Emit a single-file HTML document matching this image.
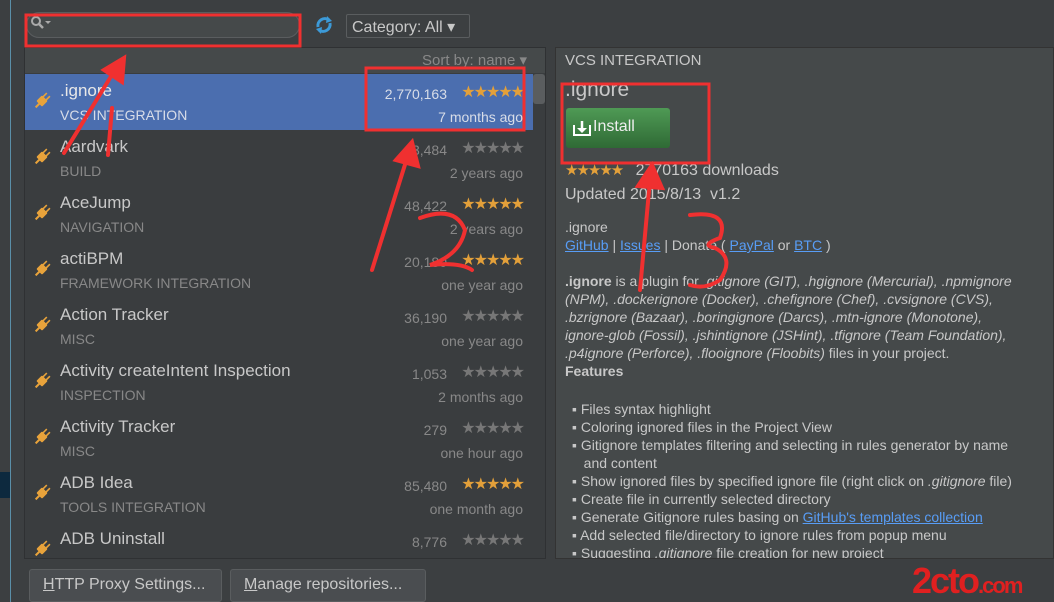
<!DOCTYPE html>
<html><head><meta charset="utf-8"><style>
*{margin:0;padding:0;box-sizing:border-box}
body{width:1054px;height:602px;background:#3c3f41;font-family:"Liberation Sans",sans-serif;color:#bbb;position:relative;overflow:hidden}
.abs{position:absolute}
.row{position:absolute;left:25px;width:508px;height:56px}
.row .n{position:absolute;left:35px;top:7px;font-size:17px;color:#c8c8c8}
.row .c{position:absolute;left:35px;top:33px;font-size:14px;color:#888}
.row .d{position:absolute;right:86px;top:12px;font-size:14px;color:#888}
.row .s{position:absolute;right:10px;top:8px;font-size:16px;color:#777;letter-spacing:-2px}
.row .s.g{color:#e3a03a}
.row .t{position:absolute;right:10px;top:35px;font-size:14px;color:#888}
.row svg{position:absolute;left:7px;top:17px}
.sel{background:#4b6eaf}
.sel .c,.sel .d,.sel .t{color:#d8dde8}
.sel .n{color:#e8e8e8}
.rp{font-size:14px;color:#c8c8c8;line-height:18px}
a{color:#589df6;text-decoration:underline}
.btn{position:absolute;top:569px;height:33px;border:1px solid #5a5d5f;border-radius:3px;background:#4a4d50;color:#c8c8c8;font-size:16px;padding:6px 13px}
</style></head><body>
<svg width="0" height="0" style="position:absolute"><defs><g id="plug"><g transform="rotate(45 10 10)"><rect x="6" y="6" width="8" height="8" rx="1" fill="#e8a33b"/><rect x="7" y="1" width="1.6" height="6" fill="#e8a33b"/><rect x="11.4" y="1" width="1.6" height="6" fill="#e8a33b"/><rect x="9" y="13" width="2" height="6" fill="#e8a33b"/></g></g></defs></svg>
<div class="abs" style="left:10px;top:0;width:1px;height:602px;background:#5a8fa8"></div>
<div class="abs" style="left:0;top:472px;width:10px;height:26px;background:#0d293e"></div>
<div class="abs" style="left:26px;top:12px;width:274px;height:26px;border:1px solid #5a5d5f;border-radius:13px;background:#45494a"></div>
<svg class="abs" style="left:30px;top:15px" width="24" height="16"><circle cx="6" cy="6" r="4" fill="none" stroke="#aaa" stroke-width="2"/><line x1="9" y1="9" x2="13" y2="13" stroke="#aaa" stroke-width="2.5"/><polygon points="15,6 21,6 18,9" fill="#aaa"/></svg>
<svg class="abs" style="left:314px;top:15px" width="20" height="20"><path d="M4 12 A7 7 0 0 1 15 5" fill="none" stroke="#3c9ad8" stroke-width="3"/><path d="M16 8 A7 7 0 0 1 5 15" fill="none" stroke="#3c9ad8" stroke-width="3"/><polygon points="13,1 18,6 12,8" fill="#3c9ad8"/><polygon points="7,19 2,14 8,12" fill="#3c9ad8"/></svg>
<div class="abs" style="left:346px;top:14px;width:124px;height:24px;border:1px solid #5a5d5f;border-radius:2px;font-size:16px;color:#c8c8c8;padding:2px 5px">Category: All &#9662;</div>
<div class="abs" style="left:24px;top:47px;width:522px;height:512px;background:#3a3d3f;border:1px solid #2f3133"></div>
<div class="abs" style="left:25px;top:48px;width:520px;height:25px;background:#45494a"></div>
<div class="abs" style="left:422px;top:51px;font-size:15px;color:#888">Sort by: name &#9662;</div>
<div class="abs" style="left:533px;top:74px;width:12px;height:30px;background:#5a5d5f;border-radius:3px"></div>

<div class="row sel" style="top:74px"><svg width="20" height="20"><use href="#plug"/></svg><div class="n">.ignore</div><div class="c">VCS INTEGRATION</div><div class="d">2,770,163</div><div class="s g">★★★★★</div><div class="t">7 months ago</div></div>
<div class="row" style="top:130px"><svg width="20" height="20"><use href="#plug"/></svg><div class="n">Aardvark</div><div class="c">BUILD</div><div class="d">3,484</div><div class="s">★★★★★</div><div class="t">2 years ago</div></div>
<div class="row" style="top:186px"><svg width="20" height="20"><use href="#plug"/></svg><div class="n">AceJump</div><div class="c">NAVIGATION</div><div class="d">48,422</div><div class="s g">★★★★★</div><div class="t">2 years ago</div></div>
<div class="row" style="top:242px"><svg width="20" height="20"><use href="#plug"/></svg><div class="n">actiBPM</div><div class="c">FRAMEWORK INTEGRATION</div><div class="d">20,180</div><div class="s g">★★★★★</div><div class="t">one year ago</div></div>
<div class="row" style="top:298px"><svg width="20" height="20"><use href="#plug"/></svg><div class="n">Action Tracker</div><div class="c">MISC</div><div class="d">36,190</div><div class="s">★★★★★</div><div class="t">one year ago</div></div>
<div class="row" style="top:354px"><svg width="20" height="20"><use href="#plug"/></svg><div class="n">Activity createIntent Inspection</div><div class="c">INSPECTION</div><div class="d">1,053</div><div class="s">★★★★★</div><div class="t">2 months ago</div></div>
<div class="row" style="top:410px"><svg width="20" height="20"><use href="#plug"/></svg><div class="n">Activity Tracker</div><div class="c">MISC</div><div class="d">279</div><div class="s">★★★★★</div><div class="t">one hour ago</div></div>
<div class="row" style="top:466px"><svg width="20" height="20"><use href="#plug"/></svg><div class="n">ADB Idea</div><div class="c">TOOLS INTEGRATION</div><div class="d">85,480</div><div class="s g">★★★★★</div><div class="t">one month ago</div></div>
<div class="row" style="top:522px;height:36px;overflow:hidden"><svg width="20" height="20"><use href="#plug"/></svg><div class="n">ADB Uninstall</div><div class="d">8,776</div><div class="s">★★★★★</div></div>

<div class="abs" style="left:555px;top:47px;width:499px;height:512px;background:#45494a;border:1px solid #333"></div>
<div class="abs rp" style="left:565px;top:52px;font-size:15px">VCS INTEGRATION</div>
<div class="abs" style="left:565px;top:78px;font-size:21px;color:#c8c8c8">.ignore</div>
<div class="abs" style="left:566px;top:108px;width:104px;height:40px;border-radius:3px;background:linear-gradient(#4f9a55,#2f6a35);color:#eee;font-size:16px;padding:10px 8px 10px 27px">Install</div>
<svg class="abs" style="left:572px;top:119px" width="20" height="18"><path d="M2 6 V16 H18 V6" fill="none" stroke="#fff" stroke-width="2"/><line x1="10" y1="2" x2="10" y2="12" stroke="#fff" stroke-width="2.5"/><polygon points="5,9 15,9 10,14" fill="#fff"/></svg>
<div class="abs" style="left:565px;top:161px;font-size:16px;color:#c8c8c8"><span style="color:#e3a03a;font-size:15px;letter-spacing:-2px">★★★★★</span> &nbsp; 2770163 downloads</div>
<div class="abs" style="left:565px;top:186px;font-size:16px;color:#c8c8c8">Updated 2015/8/13 &nbsp;v1.2</div>
<div class="abs rp" style="left:565px;top:218px;width:462px">.ignore<br><a>GitHub</a> | <a>Issues</a> | Donate ( <a>PayPal</a> or <a>BTC</a> )<br><br>
<b>.ignore</b> is a plugin for <i>.gitignore (GIT), .hgignore (Mercurial), .npmignore (NPM), .dockerignore (Docker), .chefignore (Chef), .cvsignore (CVS), .bzrignore (Bazaar), .boringignore (Darcs), .mtn-ignore (Monotone), ignore-glob (Fossil), .jshintignore (JSHint), .tfignore (Team Foundation), .p4ignore (Perforce), .flooignore (Floobits)</i> files in your project.<br><b>Features</b></div>
<div class="abs rp" style="left:572px;top:400px;width:478px;height:158px;overflow:hidden">
▪ Files syntax highlight<br>▪ Coloring ignored files in the Project View<br>▪ Gitignore templates filtering and selecting in rules generator by name<br>&nbsp;&nbsp;&nbsp;and content<br>▪ Show ignored files by specified ignore file (right click on <i>.gitignore</i> file)<br>▪ Create file in currently selected directory<br>▪ Generate Gitignore rules basing on <a>GitHub's templates collection</a><br>▪ Add selected file/directory to ignore rules from popup menu<br>▪ Suggesting <i>.gitignore</i> file creation for new project</div>

<div class="btn" style="left:29px;width:193px"><u>H</u>TTP Proxy Settings...</div>
<div class="btn" style="left:230px;width:196px"><u>M</u>anage repositories...</div>
<div class="abs" style="left:912px;top:560px;font-size:36px;font-weight:bold;color:#e02020;letter-spacing:-2px">2cto<span style="font-size:22px">.com</span></div>

<svg class="abs" style="left:0;top:0" width="1054" height="602">
<g fill="none" stroke="#f03030" stroke-width="3">
<rect x="26" y="15" width="274" height="31"/>
<rect x="366" y="68" width="158" height="62"/>
<rect x="562" y="84" width="147" height="79"/>
</g>
<g stroke="#f03030" stroke-width="4" fill="#f03030" stroke-linecap="round">
<line x1="64" y1="153" x2="118" y2="65"/><polygon points="104,70 124,58 122,82"/>
<line x1="112" y1="108" x2="108" y2="155"/>
<line x1="372" y1="270" x2="408" y2="155"/><polygon points="396,160 412,142 418,166"/>
<line x1="640" y1="290" x2="650" y2="180"/><polygon points="638,186 652,165 662,188"/>
<path d="M420 218 Q455 205 465 230 Q460 255 430 265 Q460 262 472 270" fill="none"/>
<path d="M690 215 Q730 210 720 238 Q700 245 715 248 Q735 258 720 280 Q705 290 690 285" fill="none"/>
</g>
</svg>
</body></html>
